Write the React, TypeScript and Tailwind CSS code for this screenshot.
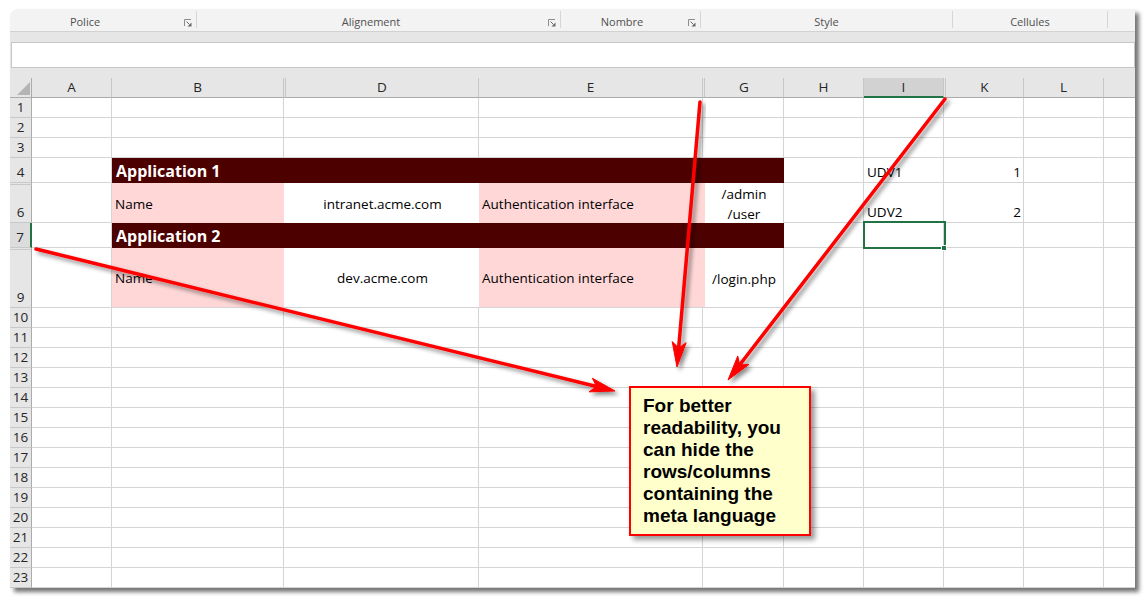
import React from 'react';

const cell = 'border-r border-b border-[#d4d4d4]';
const hid = 'border-b border-[#d4d4d4]';

function Launcher() {
  return (
    <svg width="8" height="8" viewBox="0 0 8 8" className="shrink-0">
      <path d="M0.5 7 V0.5 H7" stroke="#8c8c8c" fill="none" />
      <path d="M2.5 2.5 L5.5 5.5" stroke="#6a6a6a" />
      <path d="M7.5 3.5 V7.5 H3.5 Z" fill="#6a6a6a" />
    </svg>
  );
}

function Sep() {
  return <div className="w-px h-[17px] mt-[2px] bg-[#d6d6d6] shrink-0" />;
}

function Ribbon() {
  return (
    <div className="h-[23px] bg-[#f3f3f3] border-b border-[#d2d2d2] flex text-[11px] text-[#505050] rounded-tl-[8px]">
      <div className="w-[186px] flex items-center pt-[5px] shrink-0">
        <span className="w-[150px] text-center">Police</span>
        <span className="flex-1" />
        <Launcher />
        <span className="w-[4px]" />
      </div>
      <Sep />
      <div className="w-[363px] flex items-center pt-[5px] shrink-0">
        <span className="w-[348px] text-center">Alignement</span>
        <span className="flex-1" />
        <Launcher />
        <span className="w-[4px]" />
      </div>
      <Sep />
      <div className="w-[139px] flex items-center pt-[5px] shrink-0">
        <span className="w-[122px] text-center">Nombre</span>
        <span className="flex-1" />
        <Launcher />
        <span className="w-[4px]" />
      </div>
      <Sep />
      <div className="w-[251px] flex items-center justify-center pt-[5px] shrink-0">Style</div>
      <Sep />
      <div className="w-[154px] flex items-center justify-center pt-[5px] shrink-0">Cellules</div>
      <Sep />
      <div className="flex-1" />
    </div>
  );
}

function RowHeader({ label, sel }: { label: string; sel?: boolean }) {
  return sel ? (
    <div className="bg-[#dcdcdc] border-b border-b-[#c8c8c8] border-r-2 border-r-[#217346] flex items-end justify-center leading-[20px] text-[13.5px] text-[#262626]">
      {label}
    </div>
  ) : (
    <div className="bg-[#e6e6e6] border-b border-b-[#c8c8c8] border-r border-r-[#ababab] flex items-end justify-center leading-[20px] text-[13.5px] text-[#262626]">
      {label}
    </div>
  );
}

function Tail({ iText, kText, sel }: { iText?: string; kText?: string; sel?: boolean }) {
  return (
    <>
      <div className={cell} />
      {sel ? (
        <div className={cell + ' relative'}>
          <div className="absolute left-[-1px] top-[-2px] w-[83px] h-[28px] border-2 border-[#217346]" />
          <div className="absolute right-[-4px] bottom-[-4px] w-[6px] h-[6px] bg-[#217346] border border-white" />
        </div>
      ) : (
        <div className={cell + ' flex items-end pl-[3px] leading-[20px]'}>{iText}</div>
      )}
      <div className={hid} />
      <div className={cell + ' flex items-end justify-end pr-[2px] leading-[20px]'}>{kText}</div>
      <div className={cell} />
      <div className={hid} />
    </>
  );
}

function PlainRow({ n }: { n: string }) {
  return (
    <>
      <RowHeader label={n} />
      <div className={cell} />
      <div className={cell} />
      <div className={hid} />
      <div className={cell} />
      <div className={cell} />
      <div className={hid} />
      <div className={cell} />
      <Tail />
    </>
  );
}

function AppRow({ n, title, iText, kText, sel }: { n: string; title: string; iText?: string; kText?: string; sel?: boolean }) {
  return (
    <>
      <RowHeader label={n} sel={sel} />
      <div className={cell} />
      <div className="col-span-6 bg-[#4d0000] flex items-end pl-[4px] pb-[1px] text-white font-bold text-[16px] leading-[22px]">
        {title}
      </div>
      <Tail iText={iText} kText={kText} sel={sel} />
    </>
  );
}

function HiddenRow() {
  return (
    <>
      <div className="bg-[#e6e6e6] border-b border-b-[#c8c8c8] border-r border-r-[#ababab]" />
      <div className="border-r border-[#d4d4d4]" />
      <div className="bg-[#ffd7d7]" />
      <div />
      <div />
      <div className="bg-[#ffd7d7]" />
      <div className="bg-[#ffd7d7]" />
      <div className="border-r border-[#d4d4d4]" />
      <div className="border-r border-[#d4d4d4]" />
      <div className="border-r border-[#d4d4d4]" />
      <div />
      <div className="border-r border-[#d4d4d4]" />
      <div className="border-r border-[#d4d4d4]" />
      <div />
    </>
  );
}

function DataRow({
  n,
  host,
  paths,
  last,
  iText,
  kText,
}: {
  n: string;
  host: string;
  paths: string[];
  last?: boolean;
  iText?: string;
  kText?: string;
}) {
  return (
    <>
      <RowHeader label={n} />
      <div className={cell} />
      <div className={(last ? 'border-b border-[#d4d4d4] ' : '') + 'bg-[#ffd7d7] flex items-center pl-[3px]'}>Name</div>
      <div className={last ? 'border-b border-[#d4d4d4]' : ''} />
      <div className={(last ? 'border-b border-[#d4d4d4] ' : '') + 'flex items-center justify-center'}>{host}</div>
      <div className={(last ? 'border-b border-[#d4d4d4] ' : '') + 'bg-[#ffd7d7] flex items-center pl-[3px]'}>
        Authentication interface
      </div>
      <div className={(last ? 'border-b border-[#d4d4d4] ' : '') + 'bg-[#ffd7d7]'} />
      <div className={(last ? 'border-b ' : '') + 'border-r border-[#d4d4d4] flex flex-col items-center justify-center leading-[20px]'}>
        {paths.map((p) => (
          <span key={p}>{p}</span>
        ))}
      </div>
      <Tail iText={iText} kText={kText} />
    </>
  );
}

function ColHeader({ label, sel, narrow }: { label?: string; sel?: boolean; narrow?: boolean }) {
  if (sel)
    return (
      <div className="bg-[#d2d2d2] border-r border-r-[#c6c6c6] border-b-2 border-b-[#217346] flex items-center justify-center text-[13.5px] text-[#262626]">
        {label}
      </div>
    );
  return (
    <div
      className={
        narrow
          ? 'bg-[#e6e6e6] border-r border-r-[#c6c6c6] border-b border-b-[#ababab]'
          : 'bg-[#e6e6e6] border-r border-r-[#c6c6c6] border-b border-b-[#ababab] flex items-center justify-center text-[13.5px] text-[#262626]'
      }
    >
      {label}
    </div>
  );
}

function Arrow({ x1, y1, x2, y2 }: { x1: number; y1: number; x2: number; y2: number }) {
  const dx = x2 - x1;
  const dy = y2 - y1;
  const len = Math.hypot(dx, dy);
  const ux = dx / len;
  const uy = dy / len;
  const nx = -uy;
  const ny = ux;
  const L = 25;
  const W = 7;
  const N = 19;
  const bx = x2 - ux * L;
  const by = y2 - uy * L;
  const mx = x2 - ux * N;
  const my = y2 - uy * N;
  const pts = `${x2},${y2} ${bx + nx * W},${by + ny * W} ${mx},${my} ${bx - nx * W},${by - ny * W}`;
  return (
    <g filter="url(#shadow)">
      <line x1={x1} y1={y1} x2={mx} y2={my} stroke="#ff0000" strokeWidth={3.5} strokeLinecap="round" />
      <polygon points={pts} fill="#ff0000" stroke="#ff0000" strokeWidth={1} strokeLinejoin="round" />
    </g>
  );
}

export default function App() {
  const rest = ['10', '11', '12', '13', '14', '15', '16', '17', '18', '19', '20', '21', '22', '23'];
  return (
    <div className="w-[1145px] h-[602px] bg-white relative overflow-hidden pt-[9px] pl-[10px] font-['Open_Sans',sans-serif] text-black">
      <div className="w-[1125px] flex flex-col bg-white rounded-tl-[8px] shadow-[4px_4px_4px_rgba(0,0,0,0.55)]">
        <Ribbon />
        <div className="bg-[#e6e6e6] py-[10px] pl-px">
          <div className="h-[26px] bg-white border border-[#c6c6c6]" />
        </div>
        <div className="grid grid-cols-[22px_80px_172px_2px_193px_224px_2px_79px_80px_80px_2px_78px_80px_1fr] grid-rows-[20px_20px_20px_20px_25px_2px_38px_25px_2px_58px_repeat(14,20px)] text-[13.5px]">
          <div className="bg-[#e6e6e6] border-r border-r-[#ababab] border-b border-b-[#ababab]">
            <svg width="21" height="19" viewBox="0 0 21 19">
              <polygon points="7,17 20,17 20,4" fill="#b4b4b4" />
            </svg>
          </div>
          <ColHeader label="A" />
          <ColHeader label="B" />
          <ColHeader narrow />
          <ColHeader label="D" />
          <ColHeader label="E" />
          <ColHeader narrow />
          <ColHeader label="G" />
          <ColHeader label="H" />
          <ColHeader label="I" sel />
          <ColHeader narrow />
          <ColHeader label="K" />
          <ColHeader label="L" />
          <div className="bg-[#e6e6e6] border-b border-b-[#ababab]" />

          <PlainRow n="1" />
          <PlainRow n="2" />
          <PlainRow n="3" />
          <AppRow n="4" title="Application 1" iText="UDV1" kText="1" />
          <HiddenRow />
          <DataRow n="6" host="intranet.acme.com" paths={['/admin', '/user']} iText="UDV2" kText="2" />
          <AppRow n="7" title="Application 2" sel />
          <HiddenRow />
          <DataRow n="9" host="dev.acme.com" paths={['/login.php']} last />
          {rest.map((n) => (
            <PlainRow key={n} n={n} />
          ))}
        </div>
      </div>

      <svg className="absolute left-0 top-0 pointer-events-none" width="1145" height="602" viewBox="0 0 1145 602">
        <defs>
          <filter id="shadow" x="-20%" y="-20%" width="140%" height="140%">
            <feDropShadow dx="3" dy="3" stdDeviation="2" floodColor="#000" floodOpacity="0.45" />
          </filter>
        </defs>
        <Arrow x1={36} y1={249} x2={615} y2={391} />
        <Arrow x1={700} y1={102} x2={677} y2={367} />
        <Arrow x1={945} y1={99} x2={728} y2={380} />
      </svg>

      <div className="absolute left-[629px] top-[386px] w-[182px] h-[150px] bg-[#ffffcc] border-2 border-[#ff0000] shadow-[4px_4px_5px_rgba(0,0,0,0.4)] pl-[12px] pt-[7px] font-['Liberation_Sans',Arial,sans-serif] font-bold text-[19px] leading-[22px] text-black">
        For better
        <br />
        readability, you
        <br />
        can hide the
        <br />
        rows/columns
        <br />
        containing the
        <br />
        meta language
      </div>
    </div>
  );
}
